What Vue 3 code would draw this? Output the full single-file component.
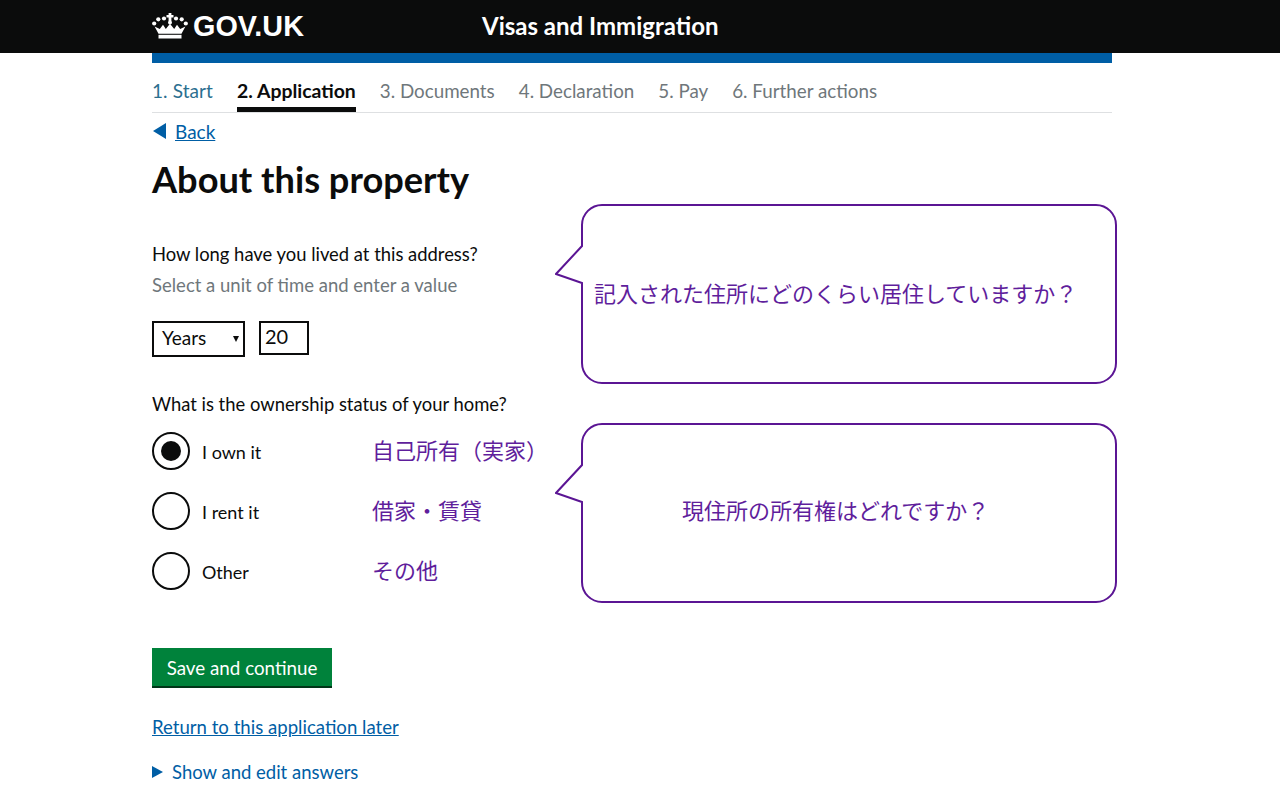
<script setup>
const steps = [
  { label: '1. Start', cls: 'done' },
  { label: '2. Application', cls: 'active' },
  { label: '3. Documents', cls: '' },
  { label: '4. Declaration', cls: '' },
  { label: '5. Pay', cls: '' },
  { label: '6. Further actions', cls: '' }
]
const radios = [
  { label: 'I own it', jp: '自己所有（実家）', checked: true },
  { label: 'I rent it', jp: '借家・賃貸', checked: false },
  { label: 'Other', jp: 'その他', checked: false }
]
</script>

<template>
  <div class="page">
    <header class="topbar">
      <div class="topinner">
        <div class="logo">
          <svg class="crown" viewBox="0 0 36 26" width="36" height="26" fill="#fff">
            <path d="M16.6 0h2.8v2h2.1v2.6h-2.1V8h-2.8V4.6h-2.1V2h2.1z" />
            <circle cx="18" cy="9.5" r="2" />
            <circle cx="12" cy="5.5" r="2.1" /><circle cx="24" cy="5.5" r="2.1" />
            <circle cx="6.3" cy="6.3" r="2.1" /><circle cx="29.7" cy="6.3" r="2.1" />
            <circle cx="2.2" cy="10.5" r="2.1" /><circle cx="33.8" cy="10.5" r="2.1" />
            <path d="M6.5 20.8 2.6 13.5l5.2 2.6 3.2-4.4 2.8 4.4 4.2-5.4 4.2 5.4 2.8-4.4 3.2 4.4 5.2-2.6-3.9 7.3z" />
            <rect x="6.5" y="21.8" width="23" height="3.7" />
          </svg>
          <span class="logotext">GOV.UK</span>
        </div>
        <div class="service">Visas and Immigration</div>
      </div>
    </header>
    <main class="wrap">
      <div class="bluebar"></div>
      <nav class="steps">
        <span v-for="s in steps" :key="s.label" class="step" :class="s.cls">{{ s.label }}</span>
      </nav>
      <a class="back" href="#"><span class="backarrow"></span><span class="link">Back</span></a>
      <h1 class="title">About this property</h1>

      <p class="q first">How long have you lived at this address?</p>
      <p class="hint">Select a unit of time and enter a value</p>
      <div class="fields">
        <div class="select">Years<span class="caret"></span></div>
        <div class="input">20</div>
      </div>

      <p class="q second">What is the ownership status of your home?</p>
      <div class="radios">
        <div v-for="r in radios" :key="r.label" class="radio">
          <span class="circle"><span v-if="r.checked" class="dot"></span></span>
          <span class="rlabel">{{ r.label }}</span>
          <span class="jp">{{ r.jp }}</span>
        </div>
      </div>

      <button class="save">Save and continue</button>
      <a class="later link" href="#">Return to this application later</a>
      <div class="show"><span class="showarrow"></span>Show and edit answers</div>

      <div class="callout c1">
        <svg width="564" height="182" viewBox="0 0 564 182">
          <path class="bubble" d="M47 1H541a20 20 0 0 1 20 20V159a20 20 0 0 1-20 20H47a20 20 0 0 1-20-20V79L1 70 27 42V21A20 20 0 0 1 47 1Z" />
        </svg>
        <span class="ctext t1">記入された住所にどのくらい居住していますか？</span>
      </div>
      <div class="callout c2">
        <svg width="564" height="182" viewBox="0 0 564 182">
          <path class="bubble" d="M47 1H541a20 20 0 0 1 20 20V159a20 20 0 0 1-20 20H47a20 20 0 0 1-20-20V79L1 70 27 42V21A20 20 0 0 1 47 1Z" />
        </svg>
        <span class="ctext t2">現住所の所有権はどれですか？</span>
      </div>
    </main>
  </div>
</template>

<style>
html, body { margin: 0; background: #fff; }
</style>

<style scoped>
.page {
  width: 1280px;
  height: 800px;
  overflow: hidden;
  font-family: Lato, "Noto Sans CJK JP", sans-serif;
  color: #0b0c0c;
}
.topbar { background: #0b0c0c; height: 53px; }
.topinner {
  width: 960px;
  margin-left: 152px;
  display: flex;
  align-items: center;
  height: 53px;
  color: #fff;
}
.logo { display: flex; align-items: center; gap: 5px; width: 330px; }
.crown { margin-top: -1px; }
.logotext { font-family: "Liberation Sans", sans-serif; font-weight: 700; font-size: 28.8px; }
.service { font-weight: 700; font-size: 24px; margin-top: -2px; }
.wrap { position: relative; width: 960px; margin-left: 152px; }
.bluebar { height: 10px; background: #005ea5; }
.steps {
  display: flex;
  gap: 24px;
  height: 49px;
  border-bottom: 1px solid #dee0e2;
}
.step {
  font-size: 18.8px;
  color: #6f777b;
  line-height: 26px;
  padding-top: 15px;
  box-sizing: border-box;
  height: 49px;
}
.step.done { color: #2b6f8f; font-size: 19px; letter-spacing: 0.1px; }
.step.active { color: #0b0c0c; font-weight: 700; font-size: 19.4px; border-bottom: 5px solid #0b0c0c; }
.back { display: flex; align-items: center; height: 36px; font-size: 19px; color: #005ea5; text-decoration: none; }
.backarrow {
  width: 0; height: 0;
  border-style: solid;
  border-width: 8px 13px 8px 0;
  border-color: transparent #005ea5 transparent transparent;
  margin-left: 1px;
  margin-right: 9px;
}
.link { color: #005ea5; text-decoration: underline; }
.title { margin: 0; font-size: 36.2px; line-height: 44px; font-weight: 700; margin-top: 8px; }
.q { margin: 0; font-size: 18.4px; line-height: 26px; }
.q.first { margin-top: 40px; }
.hint { margin: 5px 0 0; font-size: 18.5px; line-height: 26px; color: #6f777b; }
.fields { display: flex; gap: 14px; margin-top: 23px; align-items: flex-start; }
.select {
  border: 2px solid #0b0c0c;
  font-size: 19px;
  line-height: 30px;
  padding-left: 8px;
  width: 81px;
  height: 32px;
  position: relative;
}
.caret {
  position: absolute;
  right: 4px; top: 13px;
  width: 0; height: 0;
  border-style: solid;
  border-width: 6px 3px 0;
  border-color: #0b0c0c transparent transparent;
}
.input {
  width: 42px; height: 30px;
  border: 2px solid #0b0c0c;
  padding-left: 4px;
  font-size: 20px;
  line-height: 26px;
}
.q.second { margin-top: 34px; }
.radios { margin-top: 15px; display: flex; flex-direction: column; gap: 22px; }
.radio { display: flex; align-items: center; height: 38px; }
.circle {
  width: 38px; height: 38px;
  box-sizing: border-box;
  border: 2px solid #0b0c0c;
  border-radius: 50%;
  display: flex;
  align-items: center;
  justify-content: center;
  flex: none;
}
.dot { width: 20px; height: 20px; background: #0b0c0c; border-radius: 50%; }
.rlabel { width: 170px; margin-left: 12px; font-size: 18px; padding-top: 2px; }
.jp { color: #5f1e9c; font-size: 22px; font-family: "Noto Sans CJK JP", sans-serif; margin-top: -5px; white-space: nowrap; }
.save {
  display: block;
  margin-top: 58px;
  width: 180px; height: 40px;
  border: 0;
  border-bottom: 2px solid #003618;
  background: #00823b;
  color: #fff;
  font: 18.8px Lato, sans-serif;
  padding: 0;
}
.later { display: block; width: max-content; margin-top: 26px; font-size: 18.6px; line-height: 26px; }
.show { display: flex; align-items: center; margin-top: 19px; font-size: 18.5px; line-height: 26px; color: #005ea5; }
.showarrow {
  width: 0; height: 0;
  border-style: solid;
  border-width: 6px 0 6px 11px;
  border-color: transparent transparent transparent #005ea5;
  margin-right: 9px;
}
.callout { position: absolute; left: 403px; width: 564px; height: 182px; }
.c1 { top: 151px; }
.c2 { top: 370px; }
.callout svg { display: block; }
.bubble { fill: #fff; stroke: #5b1594; stroke-width: 2; }
.ctext {
  position: absolute;
  color: #5f1e9c;
  font-size: 22px;
  font-family: "Noto Sans CJK JP", sans-serif;
  white-space: nowrap;
  line-height: 32px;
}
.t1 { left: 39px; top: 72px; }
.t2 { left: 127px; top: 70px; }
</style>
